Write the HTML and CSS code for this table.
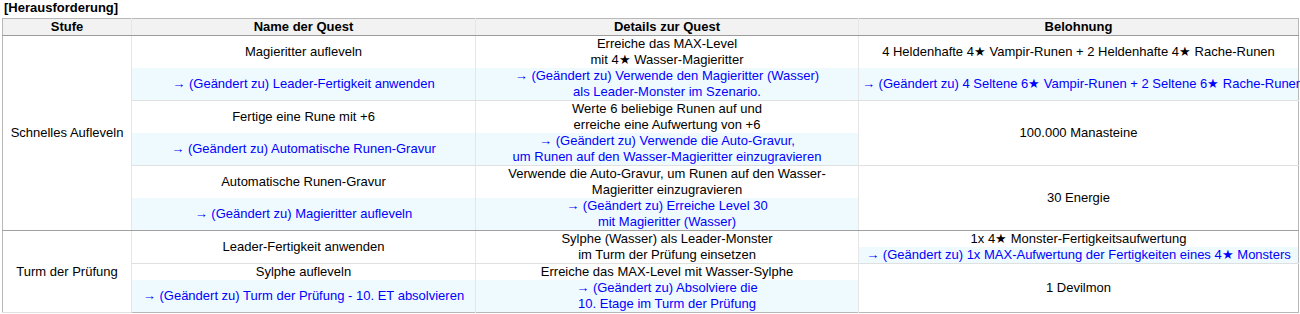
FILE: index.html
```html
<!DOCTYPE html>
<html lang="de">
<head>
<meta charset="utf-8">
<title>Herausforderung</title>
<link rel="stylesheet" href="styles.css">
</head>
<body>
<div class="title">[Herausforderung]</div>
<table class="quest">
  <colgroup>
    <col class="c1"><col class="c2"><col class="c3"><col class="c4">
  </colgroup>
  <thead>
    <tr>
      <th class="first">Stufe</th>
      <th>Name der Quest</th>
      <th>Details zur Quest</th>
      <th>Belohnung</th>
    </tr>
  </thead>
  <tbody>
    <tr>
      <td class="stufe group-end" rowspan="6">Schnelles Aufleveln</td>
      <td>Magieritter aufleveln</td>
      <td>Erreiche das MAX-Level<br>mit 4★ Wasser-Magieritter</td>
      <td>4 Heldenhafte 4★ Vampir-Runen + 2 Heldenhafte 4★ Rache-Runen</td>
    </tr>
    <tr class="pair-end">
      <td class="chg">→ (Geändert zu) Leader-Fertigkeit anwenden</td>
      <td class="chg">→ (Geändert zu) Verwende den Magieritter (Wasser)<br>als Leader-Monster im Szenario.</td>
      <td class="chg nowrap">→ (Geändert zu) 4 Seltene 6★ Vampir-Runen + 2 Seltene 6★ Rache-Runen</td>
    </tr>
    <tr>
      <td>Fertige eine Rune mit +6</td>
      <td>Werte 6 beliebige Runen auf und<br>erreiche eine Aufwertung von +6</td>
      <td class="pair-cell" rowspan="2">100.000 Manasteine</td>
    </tr>
    <tr class="pair-end">
      <td class="chg">→ (Geändert zu) Automatische Runen-Gravur</td>
      <td class="chg">→ (Geändert zu) Verwende die Auto-Gravur,<br>um Runen auf den Wasser-Magieritter einzugravieren</td>
    </tr>
    <tr>
      <td>Automatische Runen-Gravur</td>
      <td>Verwende die Auto-Gravur, um Runen auf den Wasser-<br>Magieritter einzugravieren</td>
      <td class="group-end" rowspan="2">30 Energie</td>
    </tr>
    <tr class="group-row">
      <td class="chg">→ (Geändert zu) Magieritter aufleveln</td>
      <td class="chg">→ (Geändert zu) Erreiche Level 30<br>mit Magieritter (Wasser)</td>
    </tr>
    <tr class="pair-end">
      <td class="stufe" rowspan="3">Turm der Prüfung</td>
      <td>Leader-Fertigkeit anwenden</td>
      <td>Sylphe (Wasser) als Leader-Monster<br>im Turm der Prüfung einsetzen</td>
      <td class="split">
        <div class="line">1x 4★ Monster-Fertigkeitsaufwertung</div>
        <div class="line chg-line">→ (Geändert zu) 1x MAX-Aufwertung der Fertigkeiten eines 4★ Monsters</div>
      </td>
    </tr>
    <tr>
      <td>Sylphe aufleveln</td>
      <td>Erreiche das MAX-Level mit Wasser-Sylphe</td>
      <td rowspan="2">1 Devilmon</td>
    </tr>
    <tr>
      <td class="chg">→ (Geändert zu) Turm der Prüfung - 10. ET absolvieren</td>
      <td class="chg">→ (Geändert zu) Absolviere die<br>10. Etage im Turm der Prüfung</td>
    </tr>
  </tbody>
</table>
</body>
</html>
```
FILE: styles.css
```css
html, body {
  overflow: hidden;
}
body {
  margin: 0;
  padding: 0 0 0 2px;
  font-family: "Liberation Sans", Arial, sans-serif;
  font-size: 13px;
  line-height: 16px;
  color: #000;
  background: #fff;
}
.title {
  font-weight: bold;
  height: 18px;
  padding-left: 2px;
}
.quest {
  border-collapse: collapse;
  table-layout: fixed;
  width: 1296px;
  border: 1px solid #b8b8b8;
}
.c1 { width: 129px; }
.c2 { width: 344px; }
.c3 { width: 383px; }
.c4 { width: 440px; }

.quest th,
.quest td {
  padding: 0 3px;
  text-align: center;
  vertical-align: middle;
  border-left: 1px solid #e6e6e6;
}
.quest th {
  font-weight: bold;
  background: #f2f2f2;
  border-bottom: 1px solid #9c9c9c;
}
.quest th.first,
.quest td.stufe {
  border-left: none;
}
.pair-end td,
.quest td.pair-cell {
  border-bottom: 1px solid #e0e0e0;
}
.group-row td,
.quest td.group-end {
  border-bottom: 1px solid #a0a0a0;
}
.quest td.chg {
  color: #0000ff;
  background: #effaff;
}
.quest td.nowrap {
  white-space: nowrap;
}
.quest td.split {
  padding: 0;
}
.line {
  padding: 0 3px;
  white-space: nowrap;
}
.chg-line {
  color: #0000ff;
  background: #effaff;
}
```
